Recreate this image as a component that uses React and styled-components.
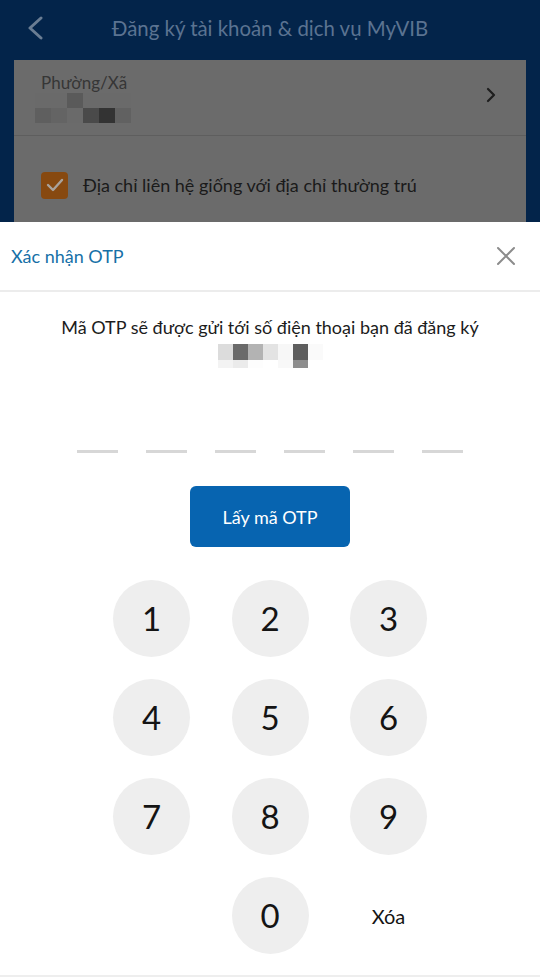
import React from "react";
import styled, { createGlobalStyle } from "styled-components";

const Global = createGlobalStyle`
  html, body { margin: 0; padding: 0; background: #ffffff; }
  body { font-family: Lato, "Noto Sans", "DejaVu Sans", sans-serif; }
  * { box-sizing: border-box; }
`;

const Screen = styled.div`
  width: 540px;
  height: 979px;
  display: flex;
  flex-direction: column;
  overflow: hidden;
  background: #03244a;
`;

const TopBar = styled.div`
  height: 60px;
  flex: none;
  display: flex;
  align-items: center;
  background: #03244a;
  padding-bottom: 4px;
`;

const BackBtn = styled.div`
  width: 70px;
  flex: none;
  display: flex;
  align-items: center;
  padding-left: 26px;
`;

const Spacer = styled.div`
  width: 70px;
  flex: none;
`;

const TopTitle = styled.div`
  flex: 1;
  text-align: center;
  font-size: 20.4px;
  color: #5b7391;
`;

const Card = styled.div`
  margin: 0 14px;
  height: 162px;
  flex: none;
  background: #6b6b6b;
  overflow: hidden;
`;

const WardRow = styled.div`
  height: 76px;
  display: flex;
  align-items: center;
  justify-content: space-between;
  padding: 0 30px 0 21px;
  border-bottom: 1px solid #5e5e5e;
`;

const WardText = styled.div`
  display: flex;
  flex-direction: column;
`;

const WardLabel = styled.div`
  font-size: 17px;
  color: #363636;
  padding-left: 6px;
  line-height: 20px;
  margin-bottom: -1px;
`;

const WardChevron = styled.div`
  display: flex;
  margin-top: -6px;
`;

const Mosaic = styled.div`
  display: grid;
  grid-template-columns: repeat(${(p) => p.$cols}, ${(p) => p.$w}px);
  grid-auto-rows: ${(p) => p.$h}px;
  margin-left: ${(p) => p.$ml || 0}px;
  margin-top: ${(p) => p.$mt || 0}px;
`;

const Px = styled.div`
  background: ${(p) => p.$c};
  height: ${(p) => p.$h || "auto"};
`;

const CheckRow = styled.div`
  height: 86px;
  display: flex;
  align-items: center;
  padding-left: 27px;
  padding-top: 12px;
  gap: 15px;
`;

const CheckBox = styled.div`
  width: 27px;
  height: 27px;
  border-radius: 4px;
  background: #874910;
  display: flex;
  align-items: center;
  justify-content: center;
`;

const CheckLabel = styled.div`
  font-size: 18px;
  color: #1a1a1a;
`;

const Sheet = styled.div`
  flex: 1;
  background: #ffffff;
  display: flex;
  flex-direction: column;
  align-items: center;
`;

const SheetHeader = styled.div`
  width: 100%;
  height: 70px;
  flex: none;
  display: flex;
  align-items: center;
  justify-content: space-between;
  padding: 0 24px 0 11px;
  border-bottom: 2px solid #ececec;
`;

const SheetTitle = styled.div`
  font-size: 18px;
  color: #1670a7;
  margin-top: -1px;
`;

const Message = styled.div`
  margin-top: 23px;
  font-size: 18px;
  line-height: 24px;
  color: #1c1c1c;
  text-align: center;
`;

const OtpLines = styled.div`
  display: flex;
  gap: 28px;
  margin-top: 74px;
`;

const OtpSlot = styled.div`
  width: 41px;
  height: 3px;
  background: #d7d7d7;
`;

const PrimaryButton = styled.button`
  margin-top: 33px;
  width: 160px;
  height: 61px;
  flex: none;
  border: none;
  border-radius: 6px;
  background: #0764b0;
  color: #ffffff;
  font-family: inherit;
  font-size: 18px;
  padding: 0;
`;

const Keypad = styled.div`
  margin-top: 33px;
  display: grid;
  grid-template-columns: repeat(3, 77px);
  grid-auto-rows: 77px;
  column-gap: 41.5px;
  row-gap: 22px;
`;

const Key = styled.div`
  width: 77px;
  height: 77px;
  border-radius: 50%;
  background: ${(p) => (p.$plain ? "transparent" : "#eeeeee")};
  display: flex;
  align-items: center;
  justify-content: center;
  font-size: ${(p) => (p.$plain ? "20px" : "33px")};
  color: #141414;
  padding-bottom: ${(p) => (p.$plain ? "0" : "2px")};
`;

const BottomRule = styled.div`
  margin-top: auto;
  width: 100%;
  height: 2px;
  background: #eeeeee;
  margin-bottom: 2px;
`;

const wardMask = [
  ["#6a6a6a", "#6a6a6a", "#5a5a5a", "#6a6a6a", "#6a6a6a", "#6a6a6a"],
  ["#5f5f5f", "#646464", "#6a6a6a", "#4a4a4a", "#333333", "#616161"],
];

const phoneMask = [
  ["#dcdcdc", "#6a6a6a", "#b3b3b3", "#e3e3e3", "#f7f7f7", "#5e5e5e", "#fafafa"],
  ["#f3f3f3", "#ebebeb", "#fdfdfd", "#ffffff", "#f8f8f8", "#8d8d8d", "#ffffff"],
];

export default function App() {
  const keys = ["1", "2", "3", "4", "5", "6", "7", "8", "9", "", "0", "Xóa"];
  return (
    <Screen>
      <Global />
      <TopBar>
        <BackBtn>
          <svg width="18" height="24" viewBox="0 0 18 24">
            <path d="M15 2 L4 12 L15 22" fill="none" stroke="#6a7d93" strokeWidth="3" strokeLinecap="round" strokeLinejoin="round" />
          </svg>
        </BackBtn>
        <TopTitle>Đăng ký tài khoản &amp; dịch vụ MyVIB</TopTitle>
        <Spacer />
      </TopBar>
      <Card>
        <WardRow>
          <WardText>
            <WardLabel>Phường/Xã</WardLabel>
            <Mosaic $cols={6} $w={16} $h={15} $mt={1}>
              {wardMask.flat().map((c, i) => (
                <Px key={i} $c={c} />
              ))}
            </Mosaic>
          </WardText>
          <WardChevron>
            <svg width="10" height="16" viewBox="0 0 10 16">
              <path d="M2 2 L8 8 L2 14" fill="none" stroke="#1e1e1e" strokeWidth="2.2" strokeLinecap="round" strokeLinejoin="round" />
            </svg>
          </WardChevron>
        </WardRow>
        <CheckRow>
          <CheckBox>
            <svg width="18" height="14" viewBox="0 0 18 14">
              <path d="M2 7 L7 12 L16 2" fill="none" stroke="#a9a39c" strokeWidth="2.4" strokeLinecap="round" strokeLinejoin="round" />
            </svg>
          </CheckBox>
          <CheckLabel>Địa chỉ liên hệ giống với địa chỉ thường trú</CheckLabel>
        </CheckRow>
      </Card>
      <Sheet>
        <SheetHeader>
          <SheetTitle>Xác nhận OTP</SheetTitle>
          <svg width="20" height="20" viewBox="0 0 20 20">
            <path d="M2 2 L18 18 M18 2 L2 18" stroke="#8c8c8c" strokeWidth="2" strokeLinecap="round" />
          </svg>
        </SheetHeader>
        <Message>Mã OTP sẽ được gửi tới số điện thoại bạn đã đăng ký</Message>
        <Mosaic $cols={7} $w={15} $h={16} $ml={1} $mt={5}>
          {phoneMask.flat().map((c, i) => (
            <Px key={i} $c={c} $h={i >= 7 ? "8px" : "16px"} />
          ))}
        </Mosaic>
        <OtpLines>
          {[0, 1, 2, 3, 4, 5].map((i) => (
            <OtpSlot key={i} />
          ))}
        </OtpLines>
        <PrimaryButton>Lấy mã OTP</PrimaryButton>
        <Keypad>
          {keys.map((k, i) => (
            <Key key={i} $plain={k === "" || k === "Xóa"}>
              {k}
            </Key>
          ))}
        </Keypad>
        <BottomRule />
      </Sheet>
    </Screen>
  );
}
